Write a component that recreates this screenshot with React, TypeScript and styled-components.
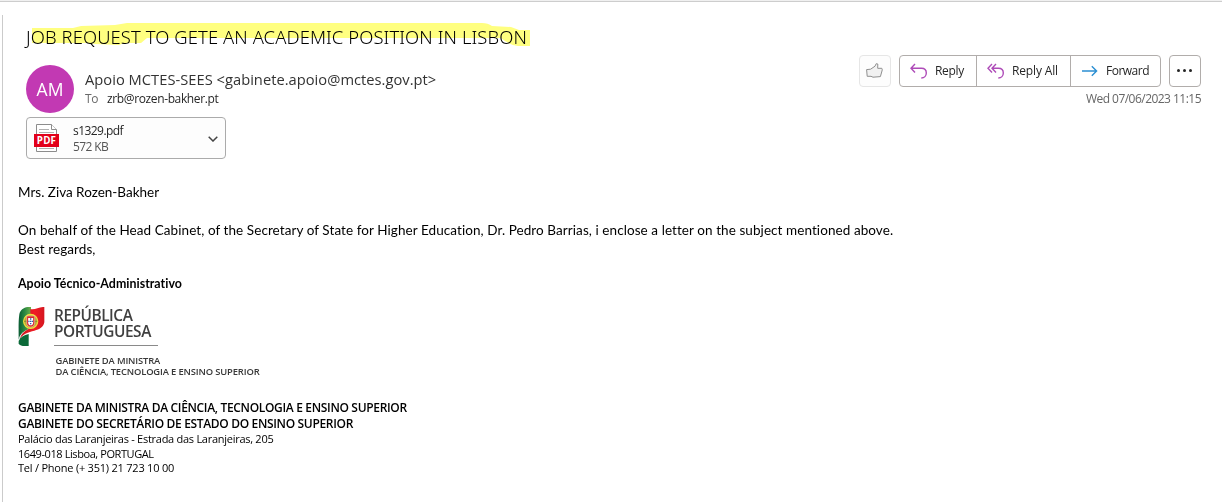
import React, { ReactElement } from 'react';
import styled, { createGlobalStyle } from 'styled-components';

const UI_FONT = "'Open Sans', 'Noto Sans', sans-serif";
const SUBJECT_FONT = "'Noto Sans', 'Open Sans', sans-serif";
const BODY_FONT = "Lato, 'Open Sans', sans-serif";

function App(): ReactElement {
  return (
    <Window>
      <GlobalStyle />
      <ReadingPane>
        <Subject>
          JOB REQUEST TO GETE AN ACADEMIC POSITION IN LISBON
          <Highlight viewBox="0 0 500 24">
            <path d="M1 5 H42 L50 3 L84 2 L96 0 H451 Q457 0 461 3 L480 4 L488 7 H499 V23 H487 Q478 22 470 15 H116 L110 20 L93 20 L88 22 L64 21 L58 20 H1 Z" />
          </Highlight>
        </Subject>
        <Header>
          <Avatar>AM</Avatar>
          <Sender>
            <SenderName>Apoio MCTES-SEES &lt;gabinete.apoio@mctes.gov.pt&gt;</SenderName>
            <Recipient>
              <ToLabel>To</ToLabel>
              zrb@rozen-bakher.pt
            </Recipient>
          </Sender>
          <Side>
            <Actions>
              <LikeButton>
                <LikeIcon />
              </LikeButton>
              <ActionGroup>
                <ActionButton $width={77} $tracking={-0.3}>
                  <ReplyIcon />
                  Reply
                </ActionButton>
                <ActionButton $width={94} $tracking={-0.15}>
                  <ReplyAllIcon />
                  Reply All
                </ActionButton>
                <ActionButton $width={89} $tracking={-0.5}>
                  <ForwardIcon />
                  Forward
                </ActionButton>
              </ActionGroup>
              <MoreButton>
                <Dot />
                <Dot />
                <Dot />
              </MoreButton>
            </Actions>
            <SentDate>Wed 07/06/2023 11:15</SentDate>
          </Side>
        </Header>
        <Attachment>
          <PdfFile>
            <PageIcon />
            <PdfTag>PDF</PdfTag>
          </PdfFile>
          <FileInfo>
            <FileName>s1329.pdf</FileName>
            <FileSize>572 KB</FileSize>
          </FileInfo>
          <Chevron viewBox="0 0 10 6">
            <path d="M0.7 0.7 L5 5 L9.3 0.7" />
          </Chevron>
        </Attachment>
        <Message>
          <Greeting>Mrs. Ziva Rozen-Bakher</Greeting>
          <Paragraph>
            On behalf of the Head Cabinet, of the Secretary of State for Higher Education, Dr. Pedro
            Barrias, i enclose a letter on the subject mentioned above.
            <br />
            Best regards,
          </Paragraph>
          <Signer>Apoio Técnico-Administrativo</Signer>
          <Logo>
            <FlagMark />
            <LogoText>
              <Country>
                REPÚBLICA
                <br />
                PORTUGUESA
              </Country>
              <Ministry>
                GABINETE DA MINISTRA
                <br />
                DA CIÊNCIA, TECNOLOGIA E ENSINO SUPERIOR
              </Ministry>
            </LogoText>
          </Logo>
          <Office>
            GABINETE DA MINISTRA DA CIÊNCIA, TECNOLOGIA E ENSINO SUPERIOR
            <br />
            GABINETE DO SECRETÁRIO DE ESTADO DO ENSINO SUPERIOR
          </Office>
          <AddressLine $tracking={-0.27}>
            Palácio das Laranjeiras - Estrada das Laranjeiras, 205
          </AddressLine>
          <AddressLine $tracking={-0.42}>1649-018 Lisboa, PORTUGAL</AddressLine>
          <AddressLine $tracking={-0.22}>Tel / Phone (+ 351) 21 723 10 00</AddressLine>
        </Message>
      </ReadingPane>
    </Window>
  );
}

function LikeIcon() {
  return (
    <svg width="17" height="15" viewBox="0 0 17 15" fill="#f1f1f1" stroke="#8f8f8f">
      <path d="M0.6 6.6 L4.6 6.2 L9 3.2 L10.2 0.7 L11.8 1 L11.7 5.3 L15.8 5.3 L16.3 6.8 L14.4 13.6 L7 14.2 L5 13.3 L1.2 13.3 Z" />
    </svg>
  );
}

function ReplyIcon() {
  return (
    <svg width="18" height="16" viewBox="0 0 18 16" fill="none" stroke="#ae4bb8" strokeWidth="1.4">
      <path d="M5 1 L1 5.2 L5 9.4 M1 5.2 H11.5 C14.5 5.2 16.3 7.3 16.3 10 C16.3 12.8 14.3 15 11.3 15" />
    </svg>
  );
}

function ReplyAllIcon() {
  return (
    <svg width="18" height="16" viewBox="0 0 18 16" fill="none" stroke="#ae4bb8" strokeWidth="1.4">
      <path d="M5 1 L1 5.2 L5 9.4 M9 1 L5 5.2 L9 9.4 M5 5.2 H11.5 C14.5 5.2 16.3 7.3 16.3 10 C16.3 12.8 14.3 15 11.3 15" />
    </svg>
  );
}

function ForwardIcon() {
  return (
    <svg width="18" height="16" viewBox="0 0 18 16" fill="none" stroke="#2b8fd2" strokeWidth="1.4">
      <path d="M1 8 H15.6 M10.8 3.2 L15.6 8 L10.8 12.8" />
    </svg>
  );
}

function PageIcon() {
  return (
    <svg width="25" height="29" viewBox="0 0 25 29" fill="#fff" stroke="#8c8c8c">
      <path d="M2.5 0.5 H17.5 L22.5 5.5 V27.5 H2.5 Z" />
      <path d="M17.5 0.5 V5.5 H22.5" />
      <path d="M5 5.5 H15 M5 8.5 H20 M5 24.5 H20" stroke="#b0b0b0" />
    </svg>
  );
}

function FlagMark() {
  return (
    <svg width="27" height="40" viewBox="54 36 81 120">
      <defs>
        <linearGradient id="leaf" x1="0" y1="0" x2="1" y2="0">
          <stop offset="0" stopColor="#0a5c34" />
          <stop offset="0.5" stopColor="#2c8a42" />
          <stop offset="1" stopColor="#6fae4a" />
        </linearGradient>
        <linearGradient id="cloth" x1="0" y1="0" x2="1" y2="0">
          <stop offset="0" stopColor="#c8161f" />
          <stop offset="0.6" stopColor="#f01c25" />
          <stop offset="1" stopColor="#d5161f" />
        </linearGradient>
      </defs>
      <path d="M93 36 C76 34 61 42 58 58 C55 78 56 104 56 134 C59 119 68 111 80 105 L93 99 Z" fill="url(#leaf)" />
      <path d="M91 42 C104 46 117 35 133 36 V82 C130 97 119 103 103 107 C84 111 69 117 60 131 C64 114 76 107 91 99 Z" fill="url(#cloth)" />
      <path d="M56 138 C61 126 71 120 86 117 V153 H74 C66 153 59 150 56 146 Z" fill="#0b6a39" />
      <circle cx="92" cy="79" r="21" fill="#b9a83a" stroke="#f2dc3c" strokeWidth="4" />
      <path d="M72 79 H112" stroke="#6f7a2c" strokeWidth="2" />
      <path d="M80 63 H104 V84 C104 92 98 96 92 96 C86 96 80 92 80 84 Z" fill="#dc2730" stroke="#f4e9c8" strokeWidth="1.5" />
      <path d="M84.5 69 H99.5 V83 C99.5 88 96 91 92 91 C88 91 84.5 88 84.5 83 Z" fill="#fff" />
      <path d="M90 70 h4 v4 h-4 Z M90 77 h4 v4 h-4 Z M90 84 h4 v4 h-4 Z M85 77 h3.5 v4 h-3.5 Z M95.5 77 h3.5 v4 h-3.5 Z" fill="#2a62ab" />
    </svg>
  );
}

const GlobalStyle = createGlobalStyle`
  body {
    margin: 0;
    background-color: #ffffff;
  }

  svg {
    flex-shrink: 0;
  }
`;

const Window = styled.div`
  box-sizing: border-box;
  width: 1222px;
  height: 502px;
  overflow: hidden;
  background-color: #ffffff;
  border-top: 1px solid #f0f0f0;
  box-shadow: inset 0 1px 0 #cdcdcd;
  padding: 14px 0 0 2px;
`;

const ReadingPane = styled.main`
  box-sizing: border-box;
  height: 487px;
  border-left: 1px solid #cbcbcb;
  padding: 9px 21px 0 15px;
`;

const Subject = styled.h1`
  position: relative;
  margin: 0 0 5px 8px;
  font-family: ${SUBJECT_FONT};
  font-size: 18.4px;
  font-weight: 350;
  letter-spacing: 0.1px;
  line-height: 26px;
  color: #000000;
`;

const Highlight = styled.svg`
  position: absolute;
  left: 5px;
  top: -1px;
  width: 500px;
  height: 24px;
  fill: #ffff80;
  mix-blend-mode: multiply;
`;

const Header = styled.header`
  display: flex;
  height: 58px;
  margin-left: 8px;
`;

const Avatar = styled.div`
  display: flex;
  align-items: center;
  justify-content: center;
  width: 48px;
  height: 48px;
  margin-top: 10px;
  border-radius: 50%;
  background-color: #c239b3;
  color: #ffffff;
  font-family: ${UI_FONT};
  font-size: 17.5px;
`;

const Sender = styled.div`
  flex: 1;
  margin: 14px 0 0 11px;
  font-family: ${UI_FONT};
`;

const SenderName = styled.div`
  font-size: 14.7px;
  letter-spacing: 0.02px;
  line-height: 20px;
  color: #333333;
`;

const Recipient = styled.div`
  display: flex;
  margin-top: 1px;
  font-size: 12px;
  letter-spacing: -0.37px;
  line-height: 17px;
  color: #262626;
`;

const ToLabel = styled.span`
  width: 22px;
  color: #6a6a6a;
`;

const Side = styled.div`
  display: flex;
  flex-direction: column;
  align-items: flex-end;
  font-family: ${UI_FONT};
`;

const Actions = styled.div`
  display: flex;
  gap: 8px;
`;

const LikeButton = styled.button`
  display: flex;
  align-items: center;
  justify-content: center;
  width: 32px;
  height: 32px;
  padding: 0 1px 2px 0;
  border: 1px solid #e6e6e6;
  border-radius: 4px;
  background-color: #fdfdfd;
`;

const ActionGroup = styled.div`
  box-sizing: border-box;
  display: flex;
  height: 32px;
  border: 1px solid #b1adab;
  border-radius: 4px;
`;

const ActionButton = styled.button<{ $width: number; $tracking: number }>`
  display: flex;
  align-items: center;
  gap: 7px;
  width: ${({ $width }) => $width}px;
  padding: 0 0 1px 10px;
  border: none;
  border-right: 1px solid #b1adab;
  background: none;
  font-family: inherit;
  font-size: 12px;
  line-height: 16px;
  letter-spacing: ${({ $tracking }) => $tracking}px;
  white-space: nowrap;
  color: #262626;

  &:last-child {
    border-right: none;
  }
`;

const MoreButton = styled.button`
  display: flex;
  align-items: center;
  justify-content: center;
  gap: 3px;
  width: 32px;
  height: 32px;
  padding: 0 2px 1px 0;
  border: 1px solid #b1adab;
  border-radius: 4px;
  background: none;
`;

const Dot = styled.i`
  width: 3px;
  height: 3px;
  border-radius: 50%;
  background-color: #262626;
`;

const SentDate = styled.time`
  margin-top: 3px;
  font-size: 12px;
  letter-spacing: -0.53px;
  line-height: 17px;
  color: #666666;
`;

const Attachment = styled.div`
  box-sizing: border-box;
  display: flex;
  align-items: center;
  width: 200px;
  height: 42px;
  margin: 4px 0 0 8px;
  padding: 0 7px;
  border: 1px solid #ababab;
  border-radius: 4px;
  background-color: #fdfdfd;
  font-family: ${UI_FONT};
`;

const PdfFile = styled.div`
  position: relative;
  width: 25px;
  height: 29px;
`;

const PdfTag = styled.span`
  position: absolute;
  left: 0;
  top: 10px;
  width: 25px;
  height: 13px;
  background-color: #e2001a;
  color: #ffffff;
  font-size: 9.8px;
  font-weight: 700;
  letter-spacing: 0.2px;
  line-height: 13px;
  text-align: center;
`;

const FileInfo = styled.div`
  flex: 1;
  margin: 1px 0 0 14px;
  font-size: 12px;
  line-height: 16px;
`;

const FileName = styled.div`
  letter-spacing: -0.55px;
  color: #262626;
`;

const FileSize = styled.div`
  letter-spacing: -0.6px;
  color: #555555;
`;

const Chevron = styled.svg`
  width: 10px;
  height: 6px;
  margin-top: 2px;
  fill: none;
  stroke: #444444;
  stroke-width: 1.5;
`;

const Message = styled.article`
  margin-top: 24px;
  font-family: ${BODY_FONT};
  font-variant-ligatures: none;
  color: #000000;
`;

const Paragraph = styled.p`
  margin: 0;
  font-size: 13.5px;
  letter-spacing: 0.075px;
  line-height: 19px;
`;

const Greeting = styled(Paragraph)`
  margin-bottom: 19px;
  letter-spacing: 0;
`;

const Signer = styled.p`
  margin: 17px 0 0;
  font-size: 12.4px;
  font-weight: 700;
  letter-spacing: 0.03px;
  line-height: 16px;
`;

const Logo = styled.div`
  display: flex;
  height: 78px;
  margin-top: 15px;
`;

const LogoText = styled.div`
  margin-left: 9px;
  font-family: ${UI_FONT};
  font-weight: 600;
`;

const Country = styled.div`
  box-sizing: border-box;
  width: 104px;
  height: 39px;
  padding-top: 1px;
  border-bottom: 1px solid #8a8a8a;
  font-size: 15.4px;
  letter-spacing: -0.45px;
  line-height: 16px;
  color: #404040;
`;

const Ministry = styled.div`
  margin: 9px 0 0 1.5px;
  font-size: 9.4px;
  letter-spacing: -0.14px;
  line-height: 11px;
  color: #383838;
  white-space: nowrap;
`;

const Office = styled.div`
  margin-top: 15px;
  font-family: ${UI_FONT};
  font-size: 12px;
  font-weight: 600;
  letter-spacing: -0.33px;
  line-height: 16px;
`;

const AddressLine = styled.div<{ $tracking: number }>`
  font-family: ${UI_FONT};
  font-size: 11px;
  letter-spacing: ${({ $tracking }) => $tracking}px;
  line-height: 14.6px;
`;

export default App;
